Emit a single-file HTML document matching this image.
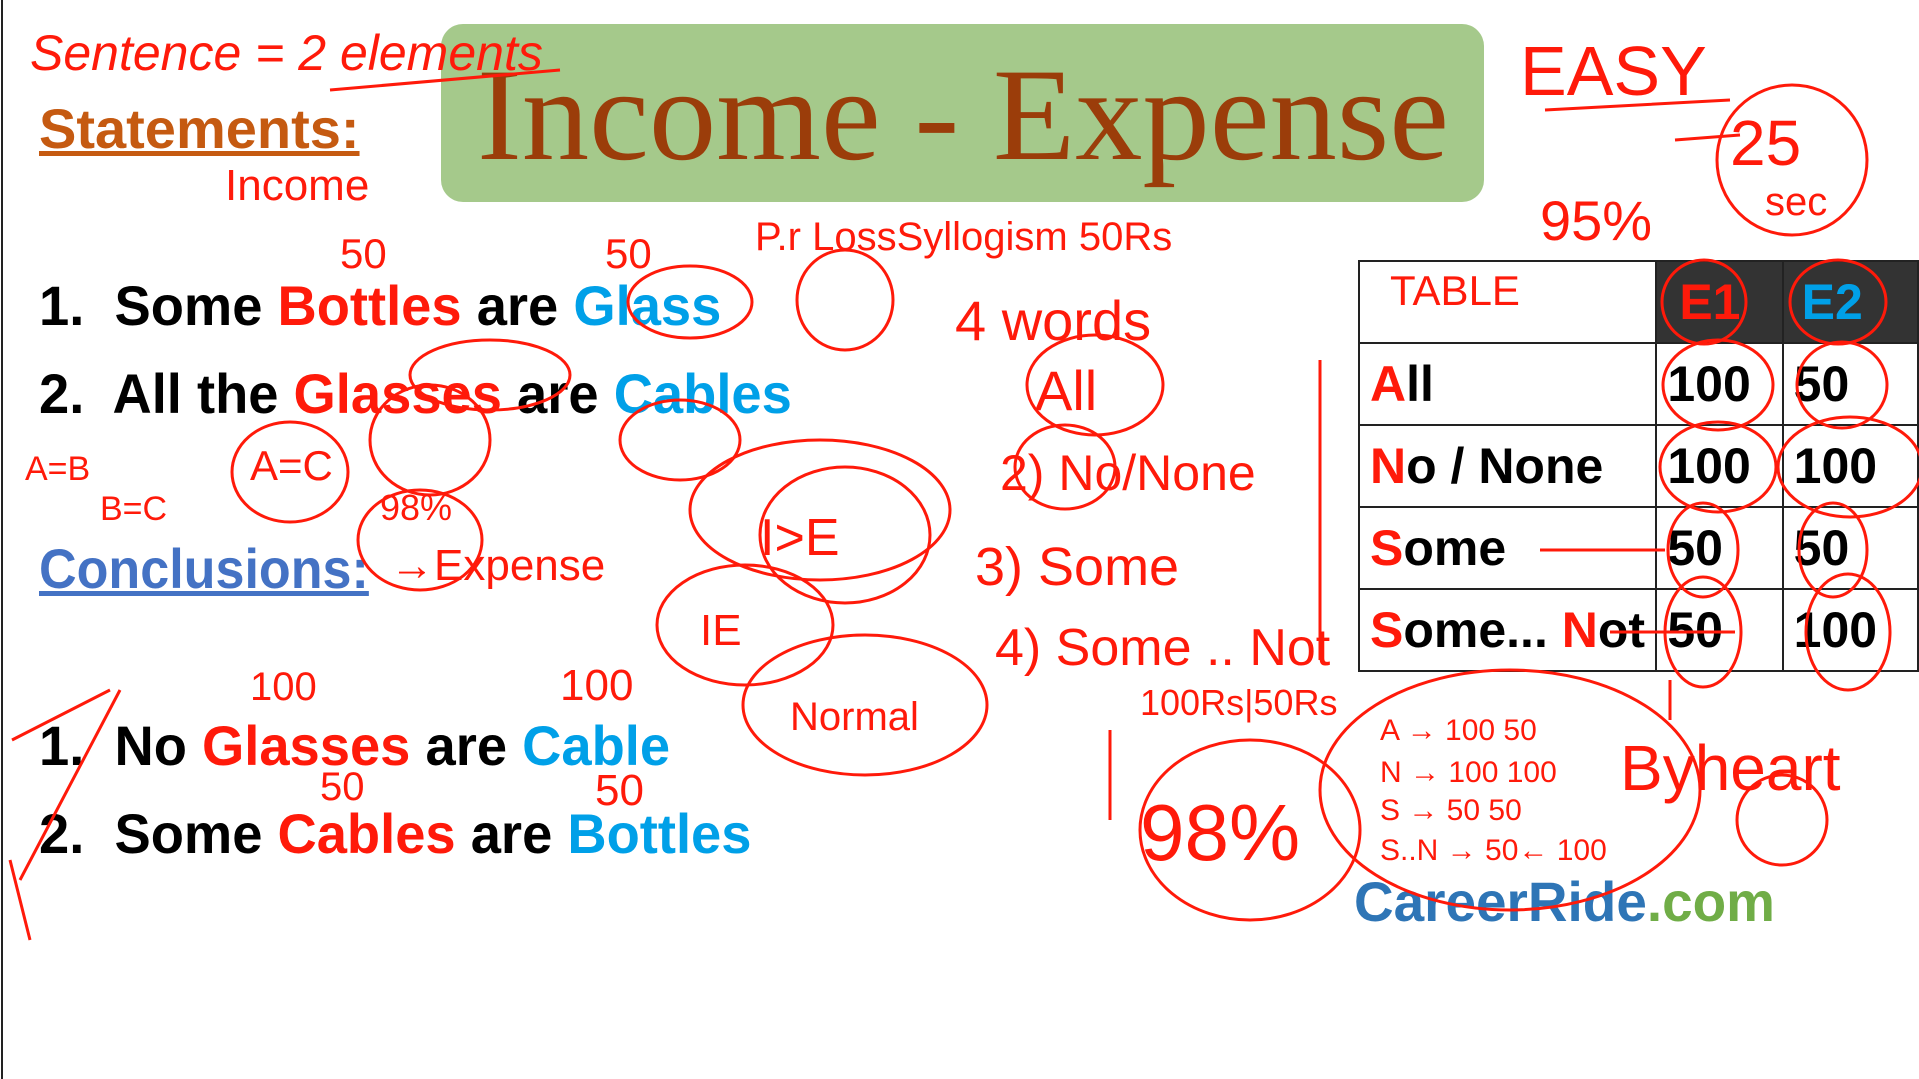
<!DOCTYPE html>
<html><head><meta charset="utf-8"><style>
*{margin:0;padding:0;box-sizing:border-box}
body{width:1919px;height:1079px;background:#fff;position:relative;overflow:hidden;font-family:"Liberation Sans",sans-serif}
.t{position:absolute;white-space:nowrap;font-weight:bold;line-height:1;transform-origin:0 0}
.r{color:#ff1a0a}.b{color:#00a0e8}.k{color:#000}
#tb{position:absolute;left:1358px;top:260px;border-collapse:collapse}
#tb td{border:2px solid #222;height:82px;font-weight:bold;font-size:50px;padding-left:10px;vertical-align:middle}
#tb .h{background:#333}
svg{position:absolute;left:0;top:0}
</style></head><body>
<div style="position:absolute;left:1px;top:0;width:2px;height:1079px;background:#222"></div>
<div style="position:absolute;left:441px;top:24px;width:1043px;height:178px;background:#a5c98b;border-radius:22px"></div>
<div class="t" style="left:477px;top:49px;font-family:'Liberation Serif',serif;font-weight:normal;font-size:132px;color:#9b3d0a;transform:scaleX(1.02)">Income - Expense</div>
<div class="t" style="left:39px;top:101px;font-size:56px;color:#c55a11;text-decoration:underline;transform:scaleX(1.0)">Statements:</div>
<div class="t k" style="left:39px;top:278px;font-size:56px;transform:scaleX(0.97)">1.&nbsp; Some <span class="r">Bottles</span> are <span class="b">Glass</span></div>
<div class="t k" style="left:39px;top:366px;font-size:56px;transform:scaleX(0.97)">2.&nbsp; All the <span class="r">Glasses</span> are <span class="b">Cables</span></div>
<div class="t" style="left:39px;top:541px;font-size:56px;color:#4472c4;text-decoration:underline;transform:scaleX(0.93)">Conclusions:</div>
<div class="t k" style="left:39px;top:718px;font-size:56px;transform:scaleX(0.97)">1.&nbsp; No <span class="r">Glasses</span> are <span class="b">Cable</span></div>
<div class="t k" style="left:39px;top:806px;font-size:56px;transform:scaleX(0.97)">2.&nbsp; Some <span class="r">Cables</span> are <span class="b">Bottles</span></div>
<table id="tb">
<tr><td style="width:310px"></td><td class="h r" style="width:130px;padding-left:22px">E1</td><td class="h b" style="width:140px;padding-left:18px">E2</td></tr>
<tr><td><span class="r">A</span>ll</td><td>100</td><td>50</td></tr>
<tr><td><span class="r">N</span>o / None</td><td>100</td><td>100</td></tr>
<tr><td><span class="r">S</span>ome</td><td>50</td><td>50</td></tr>
<tr><td><span class="r">S</span>ome... <span class="r">N</span>ot</td><td>50</td><td>100</td></tr>
</table>
<div class="t" style="left:1354px;top:874px;font-size:56px;color:#2e75b6;transform:scaleX(0.98)">CareerRide<span style="color:#70ad47">.com</span></div>
<svg width="1919" height="1079" fill="none" stroke="#ff1a0a" stroke-width="3">
<text x="30" y="70" font-family="Liberation Sans" font-size="50" fill="#ff1a0a" stroke="none" font-style="italic">Sentence = 2 elements</text>
<text x="225" y="200" font-family="Liberation Sans" font-size="44" fill="#ff1a0a" stroke="none">Income</text>
<text x="1520" y="95" font-family="Liberation Sans" font-size="70" fill="#ff1a0a" stroke="none">EASY</text>
<text x="1730" y="165" font-family="Liberation Sans" font-size="64" fill="#ff1a0a" stroke="none">25</text>
<text x="1765" y="215" font-family="Liberation Sans" font-size="40" fill="#ff1a0a" stroke="none">sec</text>
<text x="1540" y="240" font-family="Liberation Sans" font-size="56" fill="#ff1a0a" stroke="none">95%</text>
<text x="1390" y="305" font-family="Liberation Sans" font-size="42" fill="#ff1a0a" stroke="none">TABLE</text>
<text x="755" y="250" font-family="Liberation Sans" font-size="40" fill="#ff1a0a" stroke="none">P.r LossSyllogism 50Rs</text>
<text x="955" y="340" font-family="Liberation Sans" font-size="56" fill="#ff1a0a" stroke="none">4 words</text>
<text x="1035" y="410" font-family="Liberation Sans" font-size="56" fill="#ff1a0a" stroke="none">All</text>
<text x="1000" y="490" font-family="Liberation Sans" font-size="50" fill="#ff1a0a" stroke="none">2) No/None</text>
<text x="975" y="585" font-family="Liberation Sans" font-size="54" fill="#ff1a0a" stroke="none">3) Some</text>
<text x="995" y="665" font-family="Liberation Sans" font-size="52" fill="#ff1a0a" stroke="none">4) Some .. Not</text>
<text x="760" y="555" font-family="Liberation Sans" font-size="52" fill="#ff1a0a" stroke="none">I&gt;E</text>
<text x="700" y="645" font-family="Liberation Sans" font-size="44" fill="#ff1a0a" stroke="none">IE</text>
<text x="790" y="730" font-family="Liberation Sans" font-size="40" fill="#ff1a0a" stroke="none">Normal</text>
<text x="1140" y="860" font-family="Liberation Sans" font-size="80" fill="#ff1a0a" stroke="none">98%</text>
<text x="1620" y="790" font-family="Liberation Sans" font-size="64" fill="#ff1a0a" stroke="none">Byheart</text>
<text x="1380" y="740" font-family="Liberation Sans" font-size="30" fill="#ff1a0a" stroke="none">A → 100  50</text>
<text x="1380" y="782" font-family="Liberation Sans" font-size="30" fill="#ff1a0a" stroke="none">N → 100  100</text>
<text x="1380" y="820" font-family="Liberation Sans" font-size="30" fill="#ff1a0a" stroke="none">S → 50  50</text>
<text x="1380" y="860" font-family="Liberation Sans" font-size="30" fill="#ff1a0a" stroke="none">S..N → 50← 100</text>
<text x="1140" y="715" font-family="Liberation Sans" font-size="36" fill="#ff1a0a" stroke="none">100Rs|50Rs</text>
<text x="380" y="520" font-family="Liberation Sans" font-size="36" fill="#ff1a0a" stroke="none">98%</text>
<text x="390" y="580" font-family="Liberation Sans" font-size="44" fill="#ff1a0a" stroke="none">→Expense</text>
<text x="250" y="700" font-family="Liberation Sans" font-size="40" fill="#ff1a0a" stroke="none">100</text>
<text x="560" y="700" font-family="Liberation Sans" font-size="44" fill="#ff1a0a" stroke="none">100</text>
<text x="320" y="800" font-family="Liberation Sans" font-size="40" fill="#ff1a0a" stroke="none">50</text>
<text x="595" y="805" font-family="Liberation Sans" font-size="44" fill="#ff1a0a" stroke="none">50</text>
<text x="340" y="268" font-family="Liberation Sans" font-size="42" fill="#ff1a0a" stroke="none">50</text>
<text x="605" y="268" font-family="Liberation Sans" font-size="42" fill="#ff1a0a" stroke="none">50</text>
<text x="250" y="480" font-family="Liberation Sans" font-size="42" fill="#ff1a0a" stroke="none">A=C</text>
<text x="25" y="480" font-family="Liberation Sans" font-size="34" fill="#ff1a0a" stroke="none">A=B</text>
<text x="100" y="520" font-family="Liberation Sans" font-size="34" fill="#ff1a0a" stroke="none">B=C</text>
<ellipse cx="690" cy="302" rx="62" ry="36"/><ellipse cx="490" cy="375" rx="80" ry="35"/>
<ellipse cx="290" cy="472" rx="58" ry="50"/><ellipse cx="430" cy="440" rx="60" ry="55"/><ellipse cx="420" cy="540" rx="62" ry="50"/>
<ellipse cx="680" cy="440" rx="60" ry="40"/><ellipse cx="845" cy="300" rx="48" ry="50"/><ellipse cx="1095" cy="385" rx="68" ry="50"/>
<ellipse cx="1065" cy="467" rx="50" ry="42"/><ellipse cx="820" cy="510" rx="130" ry="70"/><ellipse cx="845" cy="535" rx="85" ry="68"/>
<ellipse cx="745" cy="625" rx="88" ry="60"/><ellipse cx="865" cy="705" rx="122" ry="70"/><ellipse cx="1250" cy="830" rx="110" ry="90"/>
<ellipse cx="1510" cy="790" rx="190" ry="120"/><ellipse cx="1782" cy="820" rx="45" ry="45"/><ellipse cx="1792" cy="160" rx="75" ry="75"/>
<ellipse cx="1704" cy="302" rx="42" ry="42"/><ellipse cx="1838" cy="302" rx="48" ry="42"/><ellipse cx="1718" cy="385" rx="55" ry="45"/>
<ellipse cx="1842" cy="385" rx="45" ry="43"/><ellipse cx="1718" cy="467" rx="58" ry="45"/><ellipse cx="1850" cy="467" rx="72" ry="50"/>
<ellipse cx="1703" cy="550" rx="35" ry="47"/><ellipse cx="1833" cy="550" rx="34" ry="47"/><ellipse cx="1703" cy="632" rx="38" ry="55"/><ellipse cx="1848" cy="632" rx="42" ry="58"/>
<path d="M1545 110 L1730 100 M1675 140 L1740 135 M1540 550 L1665 550 M1610 632 L1735 632 M330 90 L560 70 M30 940 L10 860 M20 880 L120 690 M12 740 L110 690 M1320 360 L1320 660 M1110 730 L1110 820 M1670 680 L1670 720"/>
</svg>
</body></html>
